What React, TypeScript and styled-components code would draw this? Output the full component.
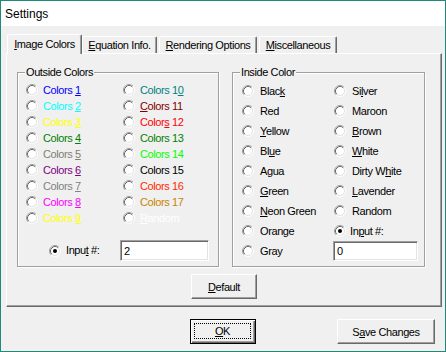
import React from 'react';
import styled, { createGlobalStyle } from 'styled-components';

const GlobalStyle = createGlobalStyle`
    html, body {
        margin: 0;
        padding: 0;
        background: #ffffff;
    }
    body {
        font-family: "Liberation Sans", Arial, sans-serif;
    }
`;

const Window = styled.div`
    width: 446px;
    height: 352px;
    box-sizing: border-box;
    border: 1px solid #1f8a7c;
    display: flex;
    flex-direction: column;
    background: #f0f0f0;
    font-family: 'Liberation Sans', Arial, sans-serif;
    font-size: 11px;
    letter-spacing: -0.4px;
    color: #000;
`;

const TitleBar = styled.div`
    height: 25px;
    background: #ffffff;
    display: flex;
    align-items: center;
    padding-left: 4px;
    font-size: 12px;
    letter-spacing: 0;
`;

const Body = styled.div`
    flex: 1;
    display: flex;
    flex-direction: column;
    padding: 8px 0 0 5px;
`;

const TabRow = styled.div`
    display: flex;
    align-items: flex-start;
    height: 19px;
    padding-left: 1px;
    position: relative;
    z-index: 1;
`;

const Tab = styled.div<{ $active?: boolean; $w: number }>`
    box-sizing: border-box;
    width: ${(p) => p.$w}px;
    height: ${(p) => (p.$active ? 20 : 17)}px;
    margin-top: ${(p) => (p.$active ? 0 : 2)}px;
    margin-right: ${(p) => (p.$active ? 0 : 2)}px;
    background: #f0f0f0;
    border: 1px solid;
    border-bottom: none;
    border-color: #ffffff #696969 transparent #ffffff;
    box-shadow: inset -1px 0 #a0a0a0;
    border-radius: 2px 2px 0 0;
    display: flex;
    justify-content: center;
    padding-top: ${(p) => (p.$active ? 3 : 2)}px;
    line-height: 13px;
    white-space: nowrap;
`;

const Panel = styled.div`
    box-sizing: border-box;
    width: 436px;
    height: 254px;
    border: 1px solid;
    border-color: #ffffff #696969 #696969 #ffffff;
    box-shadow: inset -1px -1px #a0a0a0;
    display: flex;
    flex-direction: column;
`;

const GroupRow = styled.div`
    display: flex;
    gap: 13px;
    padding: 18px 0 0 10px;
`;

const GroupBox = styled.div<{ $w: number }>`
    position: relative;
    box-sizing: border-box;
    width: ${(p) => p.$w}px;
    height: 195px;
    border: 1px solid #a0a0a0;
    box-shadow: 1px 1px #ffffff, inset 1px 1px #ffffff;
`;

const Legend = styled.span`
    position: absolute;
    top: -7px;
    left: 7px;
    padding: 0 1px;
    background: #f0f0f0;
    line-height: 13px;
`;

const RadioGrid = styled.div<{ $col: number; $row: number; $pad: string }>`
    display: grid;
    grid-template-columns: ${(p) => p.$col}px 1fr;
    grid-template-rows: repeat(9, ${(p) => p.$row}px);
    grid-auto-flow: column;
    padding: ${(p) => p.$pad};
`;

const Option = styled.div<{ $color?: string; $gap?: number; $w?: number }>`
    display: flex;
    align-items: center;
    gap: ${(p) => p.$gap ?? 5}px;
    color: ${(p) => p.$color || '#000'};
    line-height: 13px;
    white-space: nowrap;
    ${(p) => (p.$w ? `width: ${p.$w}px;` : '')}
`;

const InputRow = styled.div`
    display: flex;
    align-items: center;
    margin-top: 14px;
    padding-left: 31px;
`;

const TextBox = styled.div<{ $w: number; $h: number }>`
    box-sizing: border-box;
    width: ${(p) => p.$w}px;
    height: ${(p) => p.$h}px;
    background: #ffffff;
    border: 1px solid;
    border-color: #a0a0a0 #ffffff #ffffff #a0a0a0;
    box-shadow: inset 1px 1px #696969, inset -1px -1px #e3e3e3;
    padding-left: 3px;
    display: flex;
    align-items: center;
    align-self: center;
`;

const GridBox = styled(TextBox)`
    margin-left: -1px;
`;

const DefaultRow = styled.div`
    display: flex;
    justify-content: center;
    margin-top: 7px;
`;

const Footer = styled.div`
    display: flex;
    justify-content: flex-end;
    gap: 81px;
    padding: 12px 10px 0 0;
`;

const Button = styled.div<{ $w: number; $default?: boolean }>`
    box-sizing: border-box;
    width: ${(p) => p.$w}px;
    height: 25px;
    background: #f0f0f0;
    display: flex;
    align-items: center;
    justify-content: center;
    border: 1px solid;
    border-color: ${(p) => (p.$default ? '#000000' : '#ffffff #696969 #696969 #ffffff')};
    box-shadow: ${(p) =>
        p.$default
            ? 'inset 1px 1px #ffffff, inset -1px -1px #696969, inset -2px -2px #a0a0a0'
            : 'inset -1px -1px #a0a0a0'};
    padding: ${(p) => (p.$default ? '3px 4px 4px 3px' : '0')};
`;

const FocusRing = styled.span`
    flex: 1;
    align-self: stretch;
    display: flex;
    align-items: center;
    justify-content: center;
    border: 1px dotted #000;
`;

const Radio = ({ checked }: { checked?: boolean }) => (
    <svg width="12" height="12" viewBox="0 0 12 12" style={{ flex: 'none' }}>
        <circle cx="6" cy="6" r="4.5" fill="#ffffff" />
        <path d="M2.11 9.89 A5.5 5.5 0 0 1 9.89 2.11" fill="none" stroke="#a0a0a0" strokeWidth="1" />
        <path d="M9.89 2.11 A5.5 5.5 0 0 1 2.11 9.89" fill="none" stroke="#ffffff" strokeWidth="1" />
        <path d="M2.82 9.18 A4.5 4.5 0 0 1 9.18 2.82" fill="none" stroke="#696969" strokeWidth="1" />
        <path d="M9.18 2.82 A4.5 4.5 0 0 1 2.82 9.18" fill="none" stroke="#e3e3e3" strokeWidth="1" />
        {checked && <circle cx="6" cy="6" r="2" fill="#000" />}
    </svg>
);

// text with one underlined accelerator letter
const Accel = ({ text, at }: { text: string; at: number }) =>
    at < 0 ? (
        <span>{text}</span>
    ) : (
        <span>
            {text.slice(0, at)}
            <u>{text[at]}</u>
            {text.slice(at + 1)}
        </span>
    );

type Item = [string, number, string?];

const OUTSIDE: Item[] = [
    ['Colors 1', 7, '#0000ff'],
    ['Colors 2', 7, '#00ffff'],
    ['Colors 3', 7, '#ffff00'],
    ['Colors 4', 7, '#008000'],
    ['Colors 5', 7, '#808070'],
    ['Colors 6', 7, '#800080'],
    ['Colors 7', 7, '#808080'],
    ['Colors 8', 7, '#ff00ff'],
    ['Colors 9', 7, '#ffff00'],
    ['Colors 10', 8, '#008080'],
    ['Colors 11', 0, '#800000'],
    ['Colors 12', 5, '#ff0000'],
    ['Colors 13', -1, '#008000'],
    ['Colors 14', -1, '#00ff00'],
    ['Colors 15', -1, '#000000'],
    ['Colors 16', -1, '#ff2a00'],
    ['Colors 17', -1, '#c88400'],
    ['Random', 0, '#ffffff'],
];

const INSIDE: Item[] = [
    ['Black', 4],
    ['Red', -1],
    ['Yellow', 0],
    ['Blue', 2],
    ['Agua', -1],
    ['Green', 0],
    ['Neon Green', 0],
    ['Orange', -1],
    ['Gray', -1],
    ['Silver', 2],
    ['Maroon', -1],
    ['Brown', 0],
    ['White', 0],
    ['Dirty White', 7],
    ['Lavender', 0],
    ['Random', -1],
];

const TABS = [
    { name: 'Image Colors', w: 75 },
    { name: 'Equation Info.', w: 75 },
    { name: 'Rendering Options', w: 98 },
    { name: 'Miscellaneous', w: 78 },
];

export default function App() {
    return (
        <>
            <GlobalStyle />
            <Window>
                <TitleBar>Settings</TitleBar>
                <Body>
                    <TabRow>
                        {TABS.map((tab, i) => (
                            <Tab key={tab.name} $w={tab.w} $active={i === 0}>
                                <Accel text={tab.name} at={0} />
                            </Tab>
                        ))}
                    </TabRow>
                    <Panel>
                        <GroupRow>
                            <GroupBox $w={202}>
                                <Legend>Outside Colors</Legend>
                                <RadioGrid $col={97} $row={16} $pad="9px 0 0 8px">
                                    {OUTSIDE.map(([text, at, color]) => (
                                        <Option key={text + color} $color={color}>
                                            <Radio />
                                            <Accel text={text} at={at} />
                                        </Option>
                                    ))}
                                </RadioGrid>
                                <InputRow>
                                    <Option $w={71}>
                                        <Radio checked />
                                        <Accel text="Input #:" at={4} />
                                    </Option>
                                    <TextBox $w={89} $h={21}>
                                        2
                                    </TextBox>
                                </InputRow>
                            </GroupBox>
                            <GroupBox $w={193}>
                                <Legend>Inside Color</Legend>
                                <RadioGrid $col={92} $row={20} $pad="8px 0 0 9px">
                                    {INSIDE.map(([text, at]) => (
                                        <Option key={text + at} $gap={6}>
                                            <Radio />
                                            <Accel text={text} at={at} />
                                        </Option>
                                    ))}
                                    <Option $gap={4}>
                                        <Radio checked />
                                        <Accel text="Input #:" at={2} />
                                    </Option>
                                    <GridBox $w={85} $h={20}>
                                        0
                                    </GridBox>
                                </RadioGrid>
                            </GroupBox>
                        </GroupRow>
                        <DefaultRow>
                            <Button $w={66}>
                                <Accel text="Default" at={0} />
                            </Button>
                        </DefaultRow>
                    </Panel>
                    <Footer>
                        <Button $w={66} $default>
                            <FocusRing>
                                <Accel text="OK" at={0} />
                            </FocusRing>
                        </Button>
                        <Button $w={98}>
                            <Accel text="Save Changes" at={1} />
                        </Button>
                    </Footer>
                </Body>
            </Window>
        </>
    );
}
